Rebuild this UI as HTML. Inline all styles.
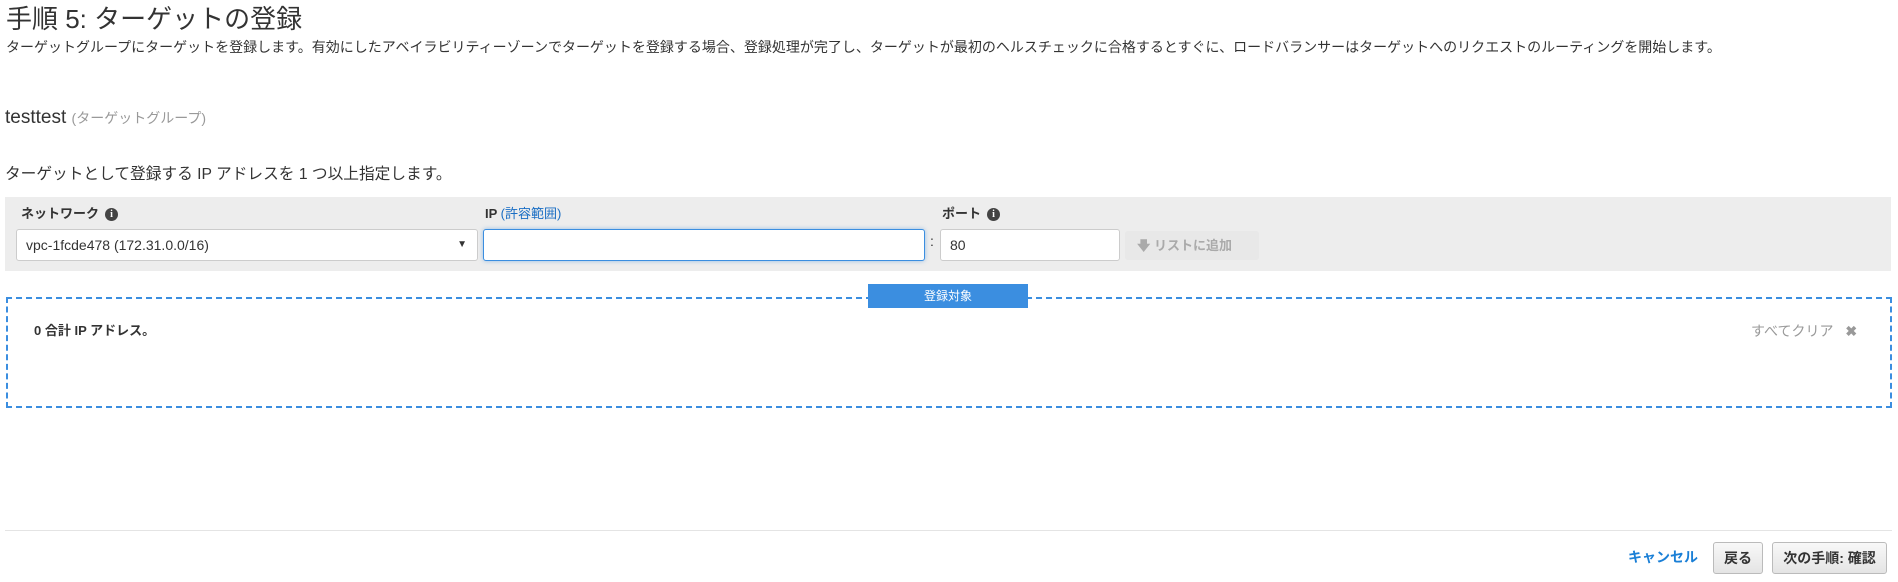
<!DOCTYPE html>
<html><head><meta charset="utf-8"><style>
*{box-sizing:border-box;margin:0;padding:0}
body{width:1898px;height:582px;background:#fff;font-family:"Liberation Sans","Noto Sans CJK JP",sans-serif;color:#333;position:relative;overflow:hidden}
.a{position:absolute;white-space:nowrap}
.inp{position:absolute;background:#fff;border:1px solid #ccc;border-radius:3px;font-size:14px;padding-left:9px;line-height:29px}
.info{display:inline-block;width:13px;height:13px;border-radius:50%;background:#444;color:#fff;font-size:10px;line-height:13px;text-align:center;font-weight:bold;vertical-align:1px;margin-left:6px;font-family:"Liberation Serif",serif}
.btn{position:absolute;border:1px solid #bbb;border-radius:3px;background:linear-gradient(#f8f8f8,#e4e4e4);font-weight:bold;font-size:14px;text-align:center;line-height:30px;color:#333}
</style></head><body>
<div class="a" style="left:6px;top:2px;font-size:26px;line-height:34px;color:#333">手順 5: ターゲットの登録</div>
<div class="a" style="left:6px;top:37px;font-size:14px;color:#333">ターゲットグループにターゲットを登録します。有効にしたアベイラビリティーゾーンでターゲットを登録する場合、登録処理が完了し、ターゲットが最初のヘルスチェックに合格するとすぐに、ロードバランサーはターゲットへのリクエストのルーティングを開始します。</div>
<div class="a" style="left:5px;top:107px;font-size:19px;color:#333">testtest <span style="font-size:14px;color:#999">(ターゲットグループ)</span></div>
<div class="a" style="left:5px;top:161px;font-size:15.7px;color:#333">ターゲットとして登録する IP アドレスを 1 つ以上指定します。</div>
<div class="a" style="left:5px;top:197px;width:1886px;height:74px;background:#ededed"></div>
<div class="a" style="left:21px;top:203px;font-size:13px;font-weight:bold">ネットワーク<span class="info">i</span></div>
<div class="a" style="left:485px;top:203px;font-size:13px;font-weight:bold">IP <span style="font-weight:normal;color:#1a6ec4">(許容範囲)</span></div>
<div class="a" style="left:942px;top:203px;font-size:13px;font-weight:bold">ポート<span class="info">i</span></div>
<div class="inp" style="left:16px;top:229px;width:462px;height:32px;line-height:30px">vpc-1fcde478 (172.31.0.0/16)<span style="position:absolute;right:10px;font-size:10px">▼</span></div>
<div class="inp" style="left:483px;top:229px;width:442px;height:32px;border:1px solid #3b8ee0;box-shadow:0 0 4px rgba(59,142,224,.5)"></div>
<div class="a" style="left:930px;top:233px;font-size:14px">:</div>
<div class="inp" style="left:940px;top:229px;width:180px;height:32px;line-height:30px">80</div>
<div class="a" style="left:1125px;top:231px;width:134px;height:29px;background:#e8e8e8;border-radius:3px;color:#aaa;font-size:13px;font-weight:bold;line-height:29px;padding-left:12px">&#129095; リストに追加</div>
<div class="a" style="left:6px;top:297px;width:1886px;height:111px;border:2px dashed #3b8ee0"></div>
<div class="a" style="left:868px;top:284px;width:160px;height:24px;background:#3b8ee0;color:#fff;font-size:12px;text-align:center;line-height:24px">登録対象</div>
<div class="a" style="left:34px;top:320px;font-size:13px;font-weight:bold">0 合計 IP アドレス。</div>
<div class="a" style="left:1751px;top:321px;font-size:14px;color:#999">すべてクリア <b style="margin-left:8px;color:#999;font-size:14px">✖</b></div>
<div class="a" style="left:5px;top:530px;width:1887px;height:1px;background:#e4e4e4"></div>
<div class="a" style="left:1628px;top:547px;font-size:14px;font-weight:bold;color:#1a7fd6">キャンセル</div>
<div class="btn" style="left:1713px;top:542px;width:50px;height:32px">戻る</div>
<div class="btn" style="left:1772px;top:542px;width:115px;height:32px">次の手順: 確認</div>
</body></html>
